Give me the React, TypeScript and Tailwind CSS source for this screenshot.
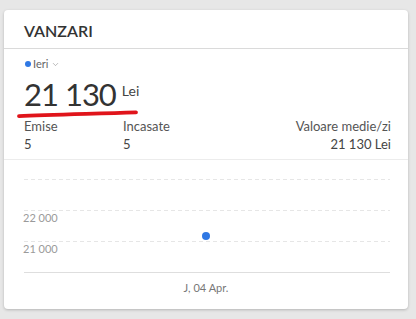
import { ChevronDown } from "lucide-react";

const FONT = { fontFamily: "Lato, 'Open Sans', sans-serif" };

function SalesChart() {
  const grid = [19, 50, 81];
  return (
    <svg width={404} height={149} className="block" style={FONT}>
      {grid.map((y) => (
        <line
          key={y}
          x1={20}
          x2={386}
          y1={y + 0.5}
          y2={y + 0.5}
          stroke="#e6e6e6"
          strokeDasharray="4 3"
        />
      ))}
      <line x1={20} x2={386} y1={112.5} y2={112.5} stroke="#dedede" />
      <text x={19} y={62} fontSize={11} fill="#9a9a9a">
        22 000
      </text>
      <text x={19} y={93} fontSize={11} fill="#9a9a9a">
        21 000
      </text>
      <text x={202} y={132} fontSize={11} fill="#777" textAnchor="middle">
        J, 04 Apr.
      </text>
      <circle cx={202} cy={76} r={4} fill="#2f78e4" />
    </svg>
  );
}

export default function App() {
  return (
    <div className="h-[319px] w-[416px] bg-[#e7e7e7] pl-[4px] pt-[10px]" style={FONT}>
      <div className="h-[299px] w-[404px] overflow-hidden rounded-[4px] bg-white shadow-[0_1px_3px_rgba(0,0,0,0.22)]">
        <div className="border-b border-[#dadada] px-5 pb-[7px] pt-[11px]">
          <h2 className="text-[16px] font-semibold leading-[20px] text-[#333]">VANZARI</h2>
        </div>

        <div className="border-b border-[#ececec] pb-[6px] pl-5 pr-[17px] pt-[8px]">
          <div className="flex items-center text-[11px] leading-[14px] text-[#666]">
            <span className="ml-[1px] h-[6px] w-[6px] rounded-full bg-[#2f78e4]" />
            <span className="ml-[2px]">Ieri</span>
            <ChevronDown size={9} strokeWidth={1.5} className="ml-[3px] text-[#888]" />
          </div>

          <div className="relative mt-[7px] flex items-start">
            <span className="text-[31px] leading-[33px] tracking-[-1px] text-[#333]">21 130</span>
            <span className="ml-[6px] mt-[5px] text-[14px] leading-[16px] text-[#444]">Lei</span>
            <svg
              width={124}
              height={10}
              className="absolute left-[-7px] top-[31px]"
              viewBox="0 0 124 10"
            >
              <path
                d="M2 7.2 C 30 5.8, 70 5, 119 3.4"
                stroke="#e0141b"
                strokeWidth={3.8}
                strokeLinecap="round"
                fill="none"
              />
            </svg>
          </div>

          <div className="mt-[6px] grid grid-cols-[99px_1fr_auto] text-[13px] leading-[18px] text-[#555]">
            <div>
              <div>Emise</div>
              <div className="text-[#444]">5</div>
            </div>
            <div>
              <div>Incasate</div>
              <div className="text-[#444]">5</div>
            </div>
            <div className="text-right">
              <div>Valoare medie/zi</div>
              <div className="text-[#444]">21 130 Lei</div>
            </div>
          </div>
        </div>

        <SalesChart />
      </div>
    </div>
  );
}
